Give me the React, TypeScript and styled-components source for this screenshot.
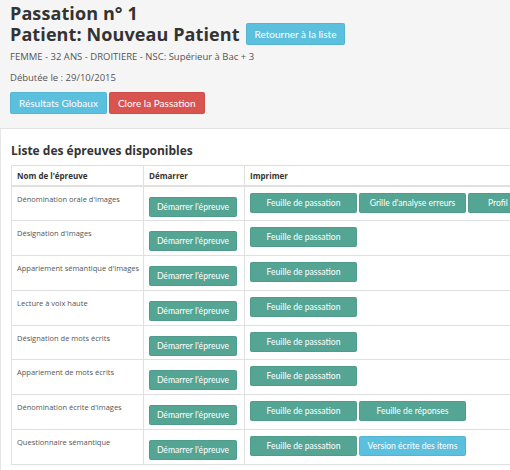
import * as React from 'react';
import styled, { createGlobalStyle, css } from 'styled-components';

const GlobalStyle = createGlobalStyle`
  html, body {
    margin: 0;
    padding: 0;
    background: #ffffff;
    overflow: hidden;
  }
  body {
    font-family: 'Open Sans', 'DejaVu Sans', sans-serif;
    color: #555555;
  }
`;

type Tone = 'info' | 'danger' | 'teal';

const toneColors: Record<Tone, string> = {
  info: '#5bc0de',
  danger: '#d9534f',
  teal: '#55a594',
};

const Page = styled.div`
  width: 510px;
  height: 470px;
  overflow: hidden;
  display: flex;
  flex-direction: column;
`;

const Header = styled.header`
  background: #f5f5f5;
  border-bottom: 1px solid #e2e2e2;
  padding: 3px 10px 0 10px;
  height: 125px;
  flex-shrink: 0;
`;

const Title = styled.h1`
  margin: 0;
  font-size: 18px;
  line-height: 20px;
  font-weight: 700;
  color: #333333;
  letter-spacing: 0.1px;
`;

const TitleLine = styled.div`
  display: flex;
  align-items: center;
  gap: 6px;
  min-height: 20px;
`;

const Button = styled.button<{ $tone: Tone; $small?: boolean }>`
  font-family: 'Lato', 'Open Sans', sans-serif;
  border: 1px solid rgba(0, 0, 0, 0.06);
  border-radius: 2px;
  color: #ffffff;
  background: ${(p) => toneColors[p.$tone]};
  cursor: pointer;
  white-space: nowrap;
  flex-shrink: 0;
  ${(p) =>
    p.$small
      ? css`
          height: 20px;
          font-size: 8.6px;
          padding: 0 3px;
        `
      : css`
          height: 22px;
          font-size: 10px;
          padding: 0 8px;
        `}
`;

const Info = styled.p`
  margin: 0;
  font-size: 9.5px;
  line-height: 14px;
  color: #555555;
`;

const InfoBlock = styled.div`
  display: flex;
  flex-direction: column;
  gap: 7px;
  margin-top: 5px;
`;

const ActionRow = styled.div`
  display: flex;
  gap: 2px;
  margin-top: 7px;
`;

const Panel = styled.section`
  flex: 1;
  background: #ffffff;
  border-left: 1px solid #e6e6e6;
  padding: 14px 0 0 10px;
`;

const SectionTitle = styled.h2`
  margin: 0 0 6px 0;
  font-size: 12px;
  line-height: 16px;
  font-weight: 700;
  color: #333333;
`;

const Table = styled.table`
  border-collapse: collapse;
  table-layout: fixed;
  width: 640px;
  border: 1px solid #e0e0e0;
`;

const HeadCell = styled.th<{ $w: number }>`
  width: ${(p) => p.$w}px;
  text-align: left;
  font-size: 8px;
  font-weight: 700;
  color: #333333;
  height: 19px;
  padding: 0 5px;
  border: 1px solid #e0e0e0;
  border-bottom: 2px solid #e0e0e0;
`;

const Cell = styled.td`
  vertical-align: top;
  height: 34.8px;
  padding: 6px 5px 0 5px;
  border: 1px solid #e0e0e0;
  box-sizing: border-box;
`;

const NameCell = styled(Cell)`
  font-size: 7.5px;
  line-height: 11px;
  color: #555555;
  padding-top: 7px;
  white-space: nowrap;
`;

const ButtonGroup = styled.div`
  display: flex;
  gap: 2px;
`;

const PrintButton = styled(Button)<{ $auto?: boolean }>`
  ${(p) =>
    p.$auto
      ? css`
          padding: 0 19px;
        `
      : css`
          width: 107px;
        `}
`;

const StartButton = styled(Button)`
  width: 88px;
`;

type Print = { label: string; tone: Tone; auto?: boolean };

type Test = {
  name: string;
  prints: Print[];
};

const tests: Test[] = [
  {
    name: "Dénomination orale d'images",
    prints: [
      { label: 'Feuille de passation', tone: 'teal' },
      { label: "Grille d'analyse erreurs", tone: 'teal' },
      { label: 'Profil', tone: 'teal', auto: true },
    ],
  },
  { name: "Désignation d'images", prints: [{ label: 'Feuille de passation', tone: 'teal' }] },
  { name: "Appariement sémantique d'images", prints: [{ label: 'Feuille de passation', tone: 'teal' }] },
  { name: 'Lecture à voix haute', prints: [{ label: 'Feuille de passation', tone: 'teal' }] },
  { name: 'Désignation de mots écrits', prints: [{ label: 'Feuille de passation', tone: 'teal' }] },
  { name: 'Appariement de mots écrits', prints: [{ label: 'Feuille de passation', tone: 'teal' }] },
  {
    name: "Dénomination écrite d'images",
    prints: [
      { label: 'Feuille de passation', tone: 'teal' },
      { label: 'Feuille de réponses', tone: 'teal' },
    ],
  },
  {
    name: 'Questionnaire sémantique',
    prints: [
      { label: 'Feuille de passation', tone: 'teal' },
      { label: 'Version écrite des items', tone: 'info' },
    ],
  },
];

export default function App() {
  return (
    <>
      <GlobalStyle />
      <Page>
        <Header>
          <Title>
            <TitleLine>Passation n° 1</TitleLine>
            <TitleLine>
              Patient: Nouveau Patient
              <Button $tone="info">Retourner à la liste</Button>
            </TitleLine>
          </Title>
          <InfoBlock>
            <Info>FEMME - 32 ANS - DROITIERE - NSC: Supérieur à Bac + 3</Info>
            <Info>Débutée le : 29/10/2015</Info>
          </InfoBlock>
          <ActionRow>
            <Button $tone="info">Résultats Globaux</Button>
            <Button $tone="danger">Clore la Passation</Button>
          </ActionRow>
        </Header>
        <Panel>
          <SectionTitle>Liste des épreuves disponibles</SectionTitle>
          <Table>
            <thead>
              <tr>
                <HeadCell $w={121}>Nom de l'épreuve</HeadCell>
                <HeadCell $w={90}>Démarrer</HeadCell>
                <HeadCell $w={399}>Imprimer</HeadCell>
              </tr>
            </thead>
            <tbody>
              {tests.map((t) => (
                <tr key={t.name}>
                  <NameCell>{t.name}</NameCell>
                  <Cell>
                    <StartButton $tone="teal" $small>
                      Démarrer l'épreuve
                    </StartButton>
                  </Cell>
                  <Cell>
                    <ButtonGroup>
                      {t.prints.map((p) => (
                        <PrintButton key={p.label} $tone={p.tone} $small $auto={p.auto}>
                          {p.label}
                        </PrintButton>
                      ))}
                    </ButtonGroup>
                  </Cell>
                </tr>
              ))}
            </tbody>
          </Table>
        </Panel>
      </Page>
    </>
  );
}
